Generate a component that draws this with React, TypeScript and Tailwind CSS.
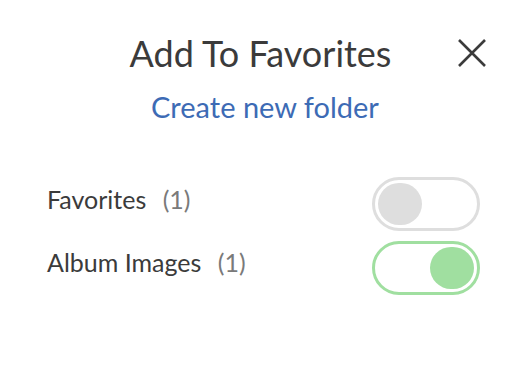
import React, { useState } from "react";

function Toggle({ on, onClick }: { on: boolean; onClick: () => void }) {
  return (
    <button
      onClick={onClick}
      className={
        "flex h-[54px] w-[108px] items-center rounded-full border-[3px] bg-white p-[3px] " +
        (on ? "justify-end border-[#a0dfa0]" : "justify-start border-[#dedede]")
      }
    >
      <span
        className={
          "block h-[42px] w-[44px] rounded-full " + (on ? "bg-[#a0dfa0]" : "bg-[#dedede]")
        }
      />
    </button>
  );
}

export default function App() {
  const [fav, setFav] = useState(false);
  const [album, setAlbum] = useState(true);
  return (
    <div className="h-[372px] w-[530px] bg-white" style={{ fontFamily: "Lato, 'Open Sans', sans-serif" }}>
      <div className="flex items-center pl-[47px] pr-[44px] pt-[32px]">
        <div className="w-[28px]" />
        <h1 className="flex-1 pr-[12px] text-center text-[36px] leading-[42px] font-normal text-[#3b3b3b]">
          Add To Favorites
        </h1>
        <button className="flex h-[28px] w-[28px] items-center justify-center text-[#3b3b3b]">
          <svg width="28" height="28" viewBox="0 0 28 28" fill="none" stroke="currentColor" strokeWidth="2.6" strokeLinecap="butt">
            <path d="M1 1 L27 27 M27 1 L1 27" />
          </svg>
        </button>
      </div>
      <div className="mt-[16px] text-center text-[29px] leading-[34px] text-[#3d6bb5]">
        Create new folder
      </div>
      <div className="mt-[53px] flex flex-col gap-[10px] pl-[47px] pr-[50px]">
        <div className="flex items-center justify-between">
          <div className="pb-[8px] text-[25px] text-[#3b3b3b]">
            Favorites <span className="ml-[10px] text-[#7a7a7a]">(1)</span>
          </div>
          <Toggle on={fav} onClick={() => setFav(!fav)} />
        </div>
        <div className="flex items-center justify-between">
          <div className="pb-[10px] text-[25px] text-[#3b3b3b]">
            Album Images <span className="ml-[10px] text-[#7a7a7a]">(1)</span>
          </div>
          <Toggle on={album} onClick={() => setAlbum(!album)} />
        </div>
      </div>
    </div>
  );
}
